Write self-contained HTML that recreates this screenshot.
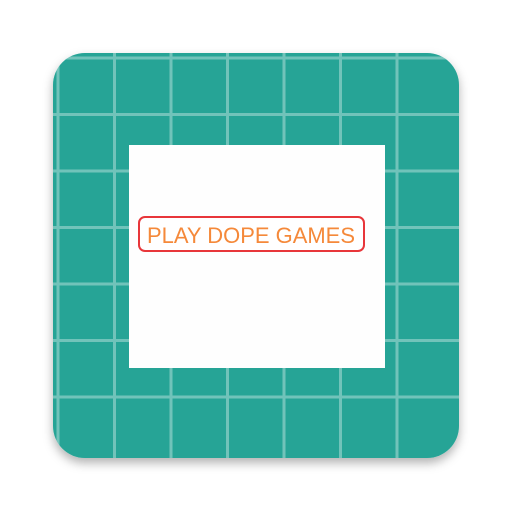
<!DOCTYPE html><html><head><style>body{margin:0;background:#fff;width:512px;height:512px;overflow:hidden}</style></head><body>
<svg width="512" height="512" xmlns="http://www.w3.org/2000/svg">
<defs><filter id="s" x="-10%" y="-10%" width="120%" height="130%"><feDropShadow dx="0" dy="5" stdDeviation="5" flood-opacity="0.3"/></filter>
<clipPath id="c"><rect x="53" y="53" width="406" height="405" rx="32"/></clipPath></defs>
<rect x="53" y="53" width="406" height="405" rx="32" fill="#26a496" filter="url(#s)"/>
<g clip-path="url(#c)" stroke="rgba(255,255,255,0.35)" stroke-width="3">
<path d="M58 40V470M114.5 40V470M171 40V470M227.5 40V470M284 40V470M340.5 40V470M397 40V470M40 58H470M40 114.5H470M40 171H470M40 227.5H470M40 284H470M40 340.5H470M40 397H470"/>
</g>
<rect x="129" y="145" width="256" height="223" fill="#fefefe"/>
<rect x="139" y="217" width="225" height="34" rx="6" fill="#fff" stroke="#e8363a" stroke-width="2"/>
<text x="147" y="243" font-family="Liberation Sans, sans-serif" font-size="22" fill="#f5893a" textLength="208" lengthAdjust="spacingAndGlyphs">PLAY DOPE GAMES</text>
</svg></body></html>
